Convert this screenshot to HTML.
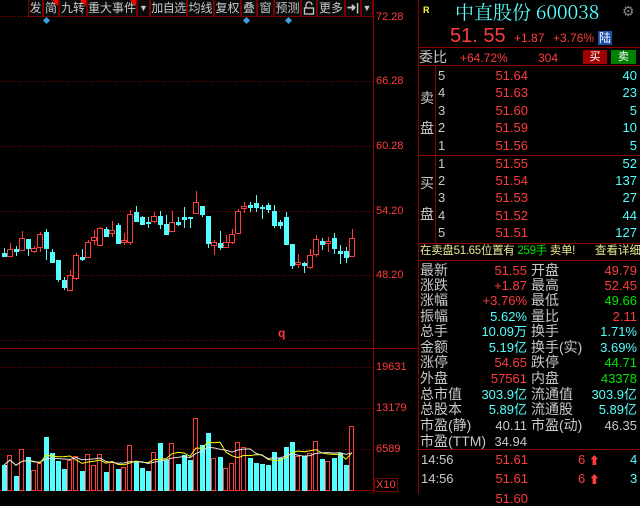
<!DOCTYPE html>
<html><head><meta charset="utf-8"><style>
*{margin:0;padding:0;box-sizing:border-box}
body{width:640px;height:494px;background:#000;overflow:hidden;position:relative;font-family:"Liberation Sans","Noto Sans CJK SC",sans-serif;}
.t{position:absolute;white-space:nowrap;line-height:1}
.r{color:#ff3c3c}.c{color:#54ffff}.g{color:#00e600}.w{color:#c8c8c8}.y{color:#ffff40}
.btn{position:absolute;top:0;height:17px;border:1px solid #700;border-top:none;color:#c8c8c8;font-size:12px;line-height:16px;text-align:center;background:#0a0a0a;white-space:nowrap;overflow:hidden}
.tri{position:absolute;top:0;right:0;width:0;height:0;border-top:6px solid #f00;border-left:6px solid transparent}
.hl{position:absolute;background:#8a0000;height:1px}
.vl{position:absolute;background:#8a0000;width:1px}
.rt{text-align:right}
.s{font-size:14px}
.n{font-size:13px}
</style></head><body>
<svg id="ch" width="640" height="494" style="position:absolute;left:0;top:0"></svg>

<div class="btn" style="left:28px;width:15px">发</div>
<div class="btn" style="left:43px;width:16px">简<i class="tri"></i></div>
<div class="btn" style="left:59px;width:28px">九转<i class="tri"></i></div>
<div class="btn" style="left:87px;width:50px">重大事件<i class="tri"></i></div>
<div class="btn" style="left:137px;width:13px;font-size:9px">▼</div>
<div class="btn" style="left:150px;width:37px;letter-spacing:-0.5px">加自选</div>
<div class="btn" style="left:187px;width:27px">均线</div>
<div class="btn" style="left:214px;width:27px">复权</div>
<div class="btn" style="left:241px;width:16px">叠</div>
<div class="btn" style="left:257px;width:17px">窗</div>
<div class="btn" style="left:274px;width:27px">预测</div>
<div class="btn" style="left:301px;width:16px"><svg width="12" height="14" style="margin-top:1px"><path d="M3 7V4a3 3 0 0 1 6 0" fill="none" stroke="#c8c8c8" stroke-width="1.3"/><rect x="1.5" y="7" width="9" height="6" fill="none" stroke="#c8c8c8" stroke-width="1.3"/></svg></div>
<div class="btn" style="left:317px;width:28px">更多</div>
<div class="btn" style="left:345px;width:16px;font-size:11px;font-weight:bold">➜|</div>
<div class="btn" style="left:361px;width:12px;font-size:9px">▼</div>

<div class="t r" style="left:376px;top:12px;font-size:11px">72.28</div>
<div class="t r" style="left:376px;top:76px;font-size:11px">66.28</div>
<div class="t r" style="left:376px;top:141px;font-size:11px">60.28</div>
<div class="t r" style="left:376px;top:206px;font-size:11px">54.20</div>
<div class="t r" style="left:376px;top:270px;font-size:11px">48.20</div>
<div class="t r" style="left:278px;top:327px;font-size:12px;font-weight:bold">q</div>
<div class="t r" style="left:376px;top:362px;font-size:11px">19631</div>
<div class="t r" style="left:376px;top:403px;font-size:11px">13179</div>
<div class="t r" style="left:376px;top:444px;font-size:11px">6589</div>
<div class="t r" style="left:374px;top:478px;font-size:11px;border:1px solid #700;padding:1px 1px 0 1px;height:14px">X10</div>

<!-- right panel -->
<div class="vl" style="left:418px;top:0;height:494px"></div>
<div class="t y" style="left:423px;top:6px;font-size:9px;font-weight:bold">R</div>
<div class="t c" style="left:455px;top:2px;font-size:19px;font-family:'Noto Serif CJK SC','Liberation Serif',serif">中直股份 600038</div>
<div class="t w" style="left:622px;top:4px;font-size:14px;color:#888">⚙</div>
<div class="t r" style="left:450px;top:26px;font-size:20px">51. 55</div>
<div class="t r" style="left:514px;top:32px;font-size:12px">+1.87</div>
<div class="t r" style="left:553px;top:32px;font-size:12px">+3.76%</div>
<div class="t" style="left:598px;top:31px;width:14px;height:14px;background:#1a4ea8;color:#fff;font-size:12px;text-align:center;line-height:14px">陆</div>
<div class="hl" style="left:418px;top:47px;width:222px"></div>
<div class="t w s" style="left:419px;top:50px">委比</div>
<div class="t r" style="left:460px;top:52px;font-size:12px">+64.72%</div>
<div class="t r" style="left:538px;top:52px;font-size:12px">304</div>
<div class="t" style="left:583px;top:50px;width:24px;height:14px;background:#a00000;color:#fff;font-size:11px;text-align:center;line-height:14px">买</div>
<div class="t" style="left:611px;top:50px;width:25px;height:14px;background:#008000;color:#fff;font-size:11px;text-align:center;line-height:14px">卖</div>
<div class="hl" style="left:418px;top:65px;width:222px"></div>
<div class="vl" style="left:435px;top:65px;height:178px"></div>
<div class="t w s" style="left:420px;top:91px">卖</div>
<div class="t w s" style="left:420px;top:121px">盘</div>
<div class="t w s" style="left:420px;top:176px">买</div>
<div class="t w s" style="left:420px;top:207px">盘</div>
<div class="hl" style="left:418px;top:155px;width:222px"></div>
<div class="hl" style="left:418px;top:243px;width:222px"></div>
<div id="ob"></div>
<div class="t" style="left:420px;top:246px;font-size:11.5px;letter-spacing:-0.3px;color:#e8e890">在卖盘51.65位置有 <span class="g">259手</span> 卖单!</div>
<div class="t" style="left:595px;top:246px;font-size:11.5px;color:#e8e890">查看详细</div>
<div class="hl" style="left:418px;top:260px;width:222px"></div>
<div id="st"></div>
<div class="hl" style="left:418px;top:449px;width:222px"></div>
<div class="t w n" style="left:421px;top:453px">14:56</div>
<div class="t r n rt" style="left:480px;top:453px;width:48px">51.61</div>
<div class="t r n" style="left:578px;top:453px">6 <span style="font-size:11px">⬆</span></div>
<div class="t c n" style="left:630px;top:453px">4</div>
<div class="t w n" style="left:421px;top:472px">14:56</div>
<div class="t r n rt" style="left:480px;top:472px;width:48px">51.61</div>
<div class="t r n" style="left:578px;top:472px">6 <span style="font-size:11px">⬆</span></div>
<div class="t c n" style="left:630px;top:472px">3</div>
<div class="t r n rt" style="left:480px;top:492px;width:48px">51.60</div>

<script>
var ob=document.getElementById('ob'),h='';
var asks=[[5,'51.64',40],[4,'51.63',23],[3,'51.60',5],[2,'51.59',10],[1,'51.56',5]];
var bids=[[1,'51.55',52],[2,'51.54',137],[3,'51.53',27],[4,'51.52',44],[5,'51.51',127]];
var ay=[69,86,104,121,139],by=[157,174,191,209,226];
function row(a,y){return '<div class="t w n" style="left:438px;top:'+y+'px">'+a[0]+'</div><div class="t r n rt" style="left:480px;top:'+y+'px;width:48px">'+a[1]+'</div><div class="t c n rt" style="left:590px;top:'+y+'px;width:47px">'+a[2]+'</div>';}
asks.forEach(function(a,i){h+=row(a,ay[i])});bids.forEach(function(a,i){h+=row(a,by[i])});
ob.innerHTML=h;
var st=[['最新','51.55','r','开盘','49.79','r'],['涨跌','+1.87','r','最高','52.45','r'],['涨幅','+3.76%','r','最低','49.66','g'],['振幅','5.62%','c','量比','2.11','r'],['总手','10.09万','c','换手','1.71%','c'],['金额','5.19亿','c','换手(实)','3.69%','c'],['涨停','54.65','r','跌停','44.71','g'],['外盘','57561','r','内盘','43378','g'],['总市值','303.9亿','c','流通值','303.9亿','c'],['总股本','5.89亿','c','流通股','5.89亿','c'],['市盈(静)','40.11','w','市盈(动)','46.35','w'],['市盈(TTM)','34.94','w','','','w']];
var sy=[263,278,293,309,324,340,355,371,387,402,418,434];h='';
st.forEach(function(s,i){var y=sy[i];h+='<div class="t w s" style="left:420px;top:'+y+'px">'+s[0]+'</div><div class="t '+s[2]+' n rt" style="left:470px;top:'+(y+1)+'px;width:57px">'+s[1]+'</div><div class="t w s" style="left:531px;top:'+y+'px">'+s[3]+'</div><div class="t '+s[5]+' n rt" style="left:580px;top:'+(y+1)+'px;width:57px">'+s[4]+'</div>';});
document.getElementById('st').innerHTML=h;

var R='#ff3c3c',C='#54ffff',s='';
s+='<line x1="0" y1="16.5" x2="373" y2="16.5" stroke="#a00" stroke-dasharray="1,2"/>';
[81,146,211,275].forEach(function(y){s+='<line x1="0" y1="'+(y+.5)+'" x2="373" y2="'+(y+.5)+'" stroke="#800" stroke-dasharray="1,2"/>'});
s+='<line x1="0" y1="340.5" x2="373" y2="340.5" stroke="#800" stroke-dasharray="1,2"/>';
s+='<line x1="0" y1="348.5" x2="418" y2="348.5" stroke="#8a0000"/>';
[367,408,449].forEach(function(y){s+='<line x1="0" y1="'+(y+.5)+'" x2="373" y2="'+(y+.5)+'" stroke="#800" stroke-dasharray="1,2"/>'});
s+='<line x1="373.5" y1="0" x2="373.5" y2="494" stroke="#8a0000"/>';
s+='<line x1="0" y1="490.5" x2="373" y2="490.5" stroke="#8a0000"/>';
[47,247,289].forEach(function(x){s+='<rect x="'+(x-3)+'" y="18" width="5" height="5" fill="#3aa0e0" transform="rotate(45 '+(x-.5)+' 20.5)"/>'});
var K=[['c',253,256,248,257],['r',249,256,243,256],['c',249,251,246,256],['r',238,250,231,250],['c',239,248,239,256],['r',248,251,246,253],['r',234,247,232,252],['c',232,248,229,260],['c',252,262,249,262],['c',260,279,260,282],['c',280,287,277,290],['r',275,290,270,290],['r',255,278,253,280],['c',257,259,249,261],['r',242,257,240,258],['r',237,240,230,245],['r',228,245,227,246],['c',229,236,227,237],['r',230,233,221,237],['c',225,243,223,243],['r',240,242,233,245],['r',214,242,210,245],['c',212,221,206,222],['c',217,224,216,225],['c',222,223,217,228],['r',216,221,212,223],['c',216,224,211,229],['c',224,234,215,235],['r',222,231,211,232],['c',222,224,217,226],['c',217,219,207,228],['c',217,218,217,228],['r',202,213,191,213],['c',206,214,206,217],['c',216,243,216,248],['r',242,245,240,255],['c',243,247,231,250],['r',242,247,235,248],['r',234,242,229,244],['r',211,233,209,233],['r',206,208,202,213],['c',205,207,202,212],['c',203,207,195,212],['c',207,208,205,219],['c',205,209,203,213],['c',211,225,205,228],['c',222,225,220,229],['c',217,244,212,245],['c',244,265,244,269],['r',262,264,254,268],['c',263,265,262,273],['r',255,267,249,269],['r',239,254,235,257],['c',241,244,238,250],['r',241,243,237,252],['c',238,248,233,254],['c',251,253,245,264],['c',251,257,247,263],['r',238,256,229,257]];
var V=[465,455,476,449,457,470,463,437,453,461,469,460,456,471,454,465,454,472,462,469,467,445,462,468,471,452,443,460,443,464,455,460,418,445,433,458,457,468,463,442,447,458,463,464,465,452,458,447,442,456,456,453,441,459,461,458,453,465,426];
K.forEach(function(k,i){var x=4+6*i,col=k[0]=='r'?R:C;
 s+='<line x1="'+(x+.5)+'" y1="'+k[3]+'" x2="'+(x+.5)+'" y2="'+k[4]+'" stroke="'+col+'"/>';
 var hh=Math.max(k[2]-k[1],1);
 if(k[0]=='r') s+='<rect x="'+(x-2.5)+'" y="'+(k[1]+.5)+'" width="5" height="'+hh+'" fill="#000" stroke="'+R+'"/>';
 else s+='<rect x="'+(x-2)+'" y="'+k[1]+'" width="5" height="'+(hh+1)+'" fill="'+C+'"/>';
 var vy=V[i];
 if(k[0]=='r') s+='<rect x="'+(x-2.5)+'" y="'+(vy+.5)+'" width="4" height="'+(490-vy)+'" fill="none" stroke="'+R+'"/>';
 else s+='<rect x="'+(x-2)+'" y="'+vy+'" width="5" height="'+(491-vy)+'" fill="'+C+'"/>';
});
var m1='',m2='';
for(var i=0;i<59;i++){var a=0,b=0,n1=0,n2=0;for(var j=Math.max(0,i-4);j<=i;j++){a+=V[j];n1++}for(var j=Math.max(0,i-9);j<=i;j++){b+=V[j];n2++}
 m1+=(i?'L':'M')+(4+6*i)+' '+(a/n1).toFixed(1);m2+=(i?'L':'M')+(4+6*i)+' '+(b/n2).toFixed(1);}
s+='<path d="'+m1+'" fill="none" stroke="#ffff00" stroke-width="1"/>';
s+='<path d="'+m2+'" fill="none" stroke="#e0e0e0" stroke-width="1"/>';
document.getElementById('ch').innerHTML=s;
</script>
</body></html>
